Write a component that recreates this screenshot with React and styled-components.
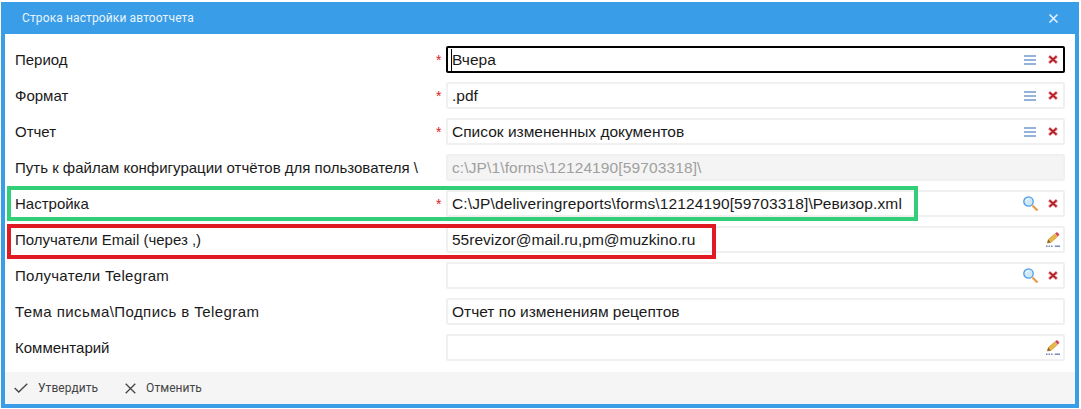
import React from "react";
import styled, { createGlobalStyle } from "styled-components";

const Global = createGlobalStyle`
  html, body { margin: 0; padding: 0; background: #fff; }
  body { font-family: "Liberation Sans", Arial, sans-serif; }
`;

const Page = styled.div`
  width: 1081px;
  height: 409px;
  padding: 2px 2px 1px 1px;
  box-sizing: border-box;
  overflow: hidden;
`;

const Dialog = styled.div`
  position: relative;
  height: 406px;
  box-sizing: border-box;
  display: flex;
  flex-direction: column;
  border: 4px solid #3a9de8;
  border-top: 0;
  background: #fff;
`;

const TitleBar = styled.div`
  height: 32px;
  flex: none;
  margin: 0 -4px;
  padding: 0 21px;
  background: #3a9de8;
  color: #e8f4fd;
  display: flex;
  align-items: center;
  justify-content: space-between;
  font: 12px Roboto, sans-serif;
  letter-spacing: 0.12px;
`;

const Form = styled.div`
  flex: 1;
  padding-top: 12px;
  display: flex;
  flex-direction: column;
  gap: 9px;
`;

const Row = styled.div`
  height: 27px;
  display: grid;
  grid-template-columns: 421px 10px 619px;
  align-items: center;
  padding-left: 10px;
  font-size: 15px;
  color: #1a1a1a;
`;

const Label = styled.div`
  white-space: nowrap;
  letter-spacing: ${(p) => p.$spacing || 0}px;
`;

const Star = styled.div`
  color: #e02020;
  font-size: 14px;
  line-height: 1;
`;

const Field = styled.div`
  height: 27px;
  box-sizing: border-box;
  display: flex;
  align-items: center;
  gap: 10px;
  padding: 0 5px 0 4px;
  border: 2px solid ${(p) => (p.$focused ? "#000" : "#f0f0f0")};
  border-radius: 2px;
  background: ${(p) => (p.$disabled ? "#f4f4f4" : "#fff")};
  color: ${(p) => (p.$disabled ? "#a0a0a0" : "#1a1a1a")};
  font-size: 15.5px;
`;

const Value = styled.div`
  flex: 1;
  white-space: nowrap;
  position: relative;
  letter-spacing: ${(p) => p.$spacing || 0}px;
`;

const Caret = styled.span`
  position: absolute;
  left: -1px;
  top: -2px;
  bottom: -2px;
  width: 1px;
  background: #000;
`;

const Footer = styled.div`
  height: 32px;
  flex: none;
  background: #f5f5f5;
  display: flex;
  align-items: center;
  gap: 27px;
  padding-left: 9px;
  font: 12px Roboto, sans-serif;
  letter-spacing: 0.05px;
  color: #444;
`;

const Action = styled.div`
  display: flex;
  align-items: center;
  gap: 10px;
`;

const Highlight = styled.div`
  position: absolute;
  left: 2px;
  top: ${(p) => p.$top}px;
  width: ${(p) => p.$width}px;
  height: ${(p) => p.$height}px;
  box-sizing: border-box;
  border: 4px solid ${(p) => p.$color};
  pointer-events: none;
`;

const PencilSvg = styled.svg`
  margin-right: -2px;
`;

const MenuIcon = () => (
  <svg width="14" height="10" viewBox="0 0 14 10">
    <path d="M0 1h12M0 5h12M0 9h12" stroke="#7299cf" strokeWidth="1.6" />
  </svg>
);

const ClearIcon = () => (
  <svg width="10" height="9" viewBox="0 0 10 9">
    <path d="M1 1l8 7M9 1L1 8" stroke="#e39a9a" strokeWidth="3" />
    <path d="M1.5 1.4l7 6.2M8.5 1.4l-7 6.2" stroke="#b81c24" strokeWidth="1.7" />
  </svg>
);

const SearchIcon = () => (
  <svg width="15" height="15" viewBox="0 0 15 15">
    <path d="M9.5 9.5l5 5" stroke="#e79a45" strokeWidth="2.2" />
    <circle cx="5.5" cy="5.5" r="4.7" fill="#cfe8fb" stroke="#4f9be0" strokeWidth="1.3" />
    <path d="M3 5.5a2.5 2.5 0 0 1 2.5-2.5" fill="none" stroke="#fff" strokeWidth="1" />
  </svg>
);

const PencilIcon = () => (
  <PencilSvg width="14" height="15" viewBox="0 0 14 15">
    <path d="M1.3 11l1-3.5L8.6 2l2.6 3-6.3 5.4z" fill="#eab64a" stroke="#c9952c" strokeWidth=".6" />
    <path d="M9 1.6L11 0l2.5 2.6-1.8 2.1z" fill="#cf4a57" />
    <path d="M1.3 11l1-3.5 2.6 2.9z" fill="#8a6a3a" />
    <path d="M0 14.2h1.6M2.5 14.2h1.6M5 14.2h1.6M8.8 14.2h5.2" stroke="#7a88bc" strokeWidth="1.6" />
  </PencilSvg>
);

const rows = [
  { label: "Период", required: true, value: "Вчера", focused: true, icons: ["menu", "clear"] },
  { label: "Формат", required: true, value: ".pdf", icons: ["menu", "clear"] },
  { label: "Отчет", required: true, value: "Список измененных документов", icons: ["menu", "clear"] },
  { label: "Путь к файлам конфигурации отчётов для пользователя \\", value: "c:\\JP\\1\\forms\\12124190[59703318]\\", valueSpacing: 0.12, disabled: true, icons: [] },
  { label: "Настройка", required: true, value: "C:\\JP\\deliveringreports\\forms\\12124190[59703318]\\Ревизор.xml", valueSpacing: 0.12, icons: ["search", "clear"] },
  { label: "Получатели Email (через ,)", value: "55revizor@mail.ru,pm@muzkino.ru", icons: ["pencil"] },
  { label: "Получатели Telegram", labelSpacing: 0.3, value: "", icons: ["search", "clear"] },
  { label: "Тема письма\\Подпись в Telegram", labelSpacing: 0.43, value: "Отчет по изменениям рецептов", icons: [] },
  { label: "Комментарий", value: "", icons: ["pencil"] },
];

const iconMap = { menu: MenuIcon, clear: ClearIcon, search: SearchIcon, pencil: PencilIcon };

export default function App() {
  return (
    <Page>
      <Global />
      <Dialog>
        <TitleBar>
          <span>Строка настройки автоотчета</span>
          <svg width="9" height="9" viewBox="0 0 9 9">
            <path d="M.5.5l8 8M8.5.5l-8 8" stroke="#e8f4fd" strokeWidth="1.5" />
          </svg>
        </TitleBar>
        <Form>
          {rows.map((r) => (
            <Row key={r.label}>
              <Label $spacing={r.labelSpacing}>{r.label}</Label>
              <Star>{r.required ? "*" : ""}</Star>
              <Field $focused={r.focused} $disabled={r.disabled}>
                <Value $spacing={r.valueSpacing}>
                  {r.focused && <Caret />}
                  {r.value}
                </Value>
                {r.icons.map((name) => {
                  const Icon = iconMap[name];
                  return <Icon key={name} />;
                })}
              </Field>
            </Row>
          ))}
        </Form>
        <Footer>
          <Action>
            <svg width="14" height="10" viewBox="0 0 14 10">
              <path d="M.7 5l4 4L13.3.7" fill="none" stroke="#444" strokeWidth="1.3" />
            </svg>
            Утвердить
          </Action>
          <Action>
            <svg width="11" height="11" viewBox="0 0 11 11">
              <path d="M.7.7l9.6 9.6M10.3.7L.7 10.3" stroke="#444" strokeWidth="1.3" />
            </svg>
            Отменить
          </Action>
        </Footer>
        <Highlight $color="#33cf78" $top={184} $width={911} $height={35} />
        <Highlight $color="#e01b24" $top={222} $width={709} $height={35} />
      </Dialog>
    </Page>
  );
}
